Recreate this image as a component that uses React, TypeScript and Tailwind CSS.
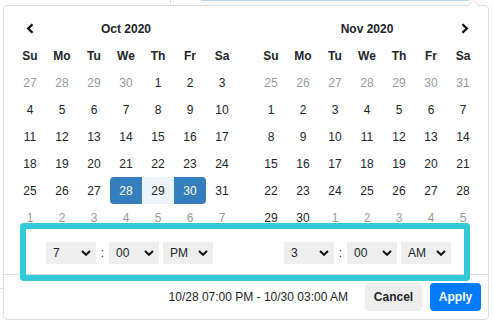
import React from "react";

const DAYS = ["Su", "Mo", "Tu", "We", "Th", "Fr", "Sa"];

type Cell = { d: number; off: boolean };

function buildOct(): Cell[] {
  const c: Cell[] = [];
  [27, 28, 29, 30].forEach((d) => c.push({ d, off: true }));
  for (let i = 1; i <= 31; i++) c.push({ d: i, off: false });
  for (let i = 1; i <= 7; i++) c.push({ d: i, off: true });
  return c;
}
function buildNov(): Cell[] {
  const c: Cell[] = [];
  [25, 26, 27, 28, 29, 30, 31].forEach((d) => c.push({ d, off: true }));
  for (let i = 1; i <= 30; i++) c.push({ d: i, off: false });
  for (let i = 1; i <= 5; i++) c.push({ d: i, off: true });
  return c;
}

function Chevron({ dir }: { dir: "left" | "right" }) {
  return (
    <svg width="9" height="11" viewBox="0 0 9 11">
      {dir === "left" ? (
        <path d="M6.5 1.2 L2.2 5.5 L6.5 9.8" fill="none" stroke="#111" strokeWidth="2.3" />
      ) : (
        <path d="M2.5 1.2 L6.8 5.5 L2.5 9.8" fill="none" stroke="#111" strokeWidth="2.3" />
      )}
    </svg>
  );
}

function Down() {
  return (
    <svg width="10" height="6" viewBox="0 0 10 6">
      <path d="M1 1 L5 4.8 L9 1" fill="none" stroke="#111" strokeWidth="2" />
    </svg>
  );
}

function Calendar({
  title,
  cells,
  arrow,
  isOct,
}: {
  title: string;
  cells: Cell[];
  arrow: "left" | "right";
  isOct: boolean;
}) {
  return (
    <div className="w-[224px]">
      <div className="grid grid-cols-[32px_160px_32px] h-[27px] items-center">
        <div className="flex justify-center">{arrow === "left" ? <Chevron dir="left" /> : null}</div>
        <div className="text-center font-bold text-[12px]">{title}</div>
        <div className="flex justify-center pl-[3px]">{arrow === "right" ? <Chevron dir="right" /> : null}</div>
      </div>
      <div className="grid grid-cols-7">
        {DAYS.map((d) => (
          <div key={d} className="h-[27px] flex items-center justify-center font-bold text-[12px]">
            {d}
          </div>
        ))}
        {cells.map((c, i) => {
          const start = isOct && !c.off && c.d === 28;
          const end = isOct && !c.off && c.d === 30;
          const mid = isOct && !c.off && c.d === 29;
          let cls = "h-[27px] flex items-center justify-center text-[12px] ";
          if (start) cls += "bg-[#357ebd] text-white rounded-l-[4px]";
          else if (end) cls += "bg-[#357ebd] text-white rounded-r-[4px]";
          else if (mid) cls += "bg-[#ebf4f8] text-[#212529]";
          else if (c.off) cls += "text-[#999]";
          else cls += "text-[#212529]";
          return (
            <div key={i} className={cls}>
              {c.d}
            </div>
          );
        })}
      </div>
    </div>
  );
}

function Sel({ v }: { v: string }) {
  return (
    <div className="w-[50px] h-[22px] bg-[#eee] flex items-center justify-between pl-[7px] pr-[5px] text-[12px] text-[#212529]">
      <span>{v}</span>
      <Down />
    </div>
  );
}

function TimeGroup({ h, m, ap }: { h: string; m: string; ap: string }) {
  return (
    <div className="flex items-center">
      <Sel v={h} />
      <div className="w-[13px] text-center text-[12px]">:</div>
      <Sel v={m} />
      <div className="w-[4px]" />
      <Sel v={ap} />
    </div>
  );
}

export default function App() {
  return (
    <div
      className="relative w-[494px] h-[322px] bg-white overflow-hidden text-[#212529]"
      style={{ fontFamily: '"Liberation Sans", Arial, sans-serif' }}
    >
      {/* background page bits */}
      <div className="absolute left-[170px] top-0 w-[1px] h-[5px] bg-[#ddd]" />
      <div className="absolute left-[201px] top-0 w-[268px] h-[1px] bg-[#b8d8fb]" />
      <div className="absolute left-0 top-[288px] w-[3px] h-[1px] bg-[#e2e2e2]" />

      {/* popup */}
      <div className="absolute left-[3px] top-[5px] w-[486px] h-[315px] border border-[#ddd] rounded-[4px] bg-white">
        {/* caret */}
        <svg className="absolute left-[463px] top-[-6px]" width="13" height="7" viewBox="0 0 13 7">
          <path d="M0 7 L6.5 0.5 L13 7 Z" fill="#fff" />
          <path d="M0 6.5 L6.5 0.5 L13 6.5" fill="none" stroke="#ddd" strokeWidth="1" />
        </svg>
        <div className="flex pt-[9px] pl-[10px] gap-[17px]">
          <Calendar title="Oct 2020" cells={buildOct()} arrow="left" isOct={true} />
          <Calendar title="Nov 2020" cells={buildNov()} arrow="right" isOct={false} />
        </div>
        <div className="flex pl-[10px] gap-[17px] mt-[11px]">
          <div className="w-[224px] pl-[32px]">
            <TimeGroup h="7" m="00" ap="PM" />
          </div>
          <div className="w-[224px] pl-[29px]">
            <TimeGroup h="3" m="00" ap="AM" />
          </div>
        </div>
        <div className="mt-[10px] border-t border-[#ddd] flex items-center justify-end pt-[8px] pr-[7px]">
          <span className="text-[12px] mr-[17px]">10/28 07:00 PM - 10/30 03:00 AM</span>
          <button className="w-[57px] h-[28px] bg-[#eee] rounded-[4px] text-[12px] font-bold text-[#212529]">
            Cancel
          </button>
          <button className="ml-[8px] w-[51px] h-[28px] bg-[#007bff] rounded-[4px] text-[12px] font-bold text-white">
            Apply
          </button>
        </div>
      </div>

      {/* highlight annotation */}
      <div className="absolute left-[20px] top-[223px] w-[450px] h-[58px] border-[6px] border-[#32c9da] rounded-[4px]" />
    </div>
  );
}
